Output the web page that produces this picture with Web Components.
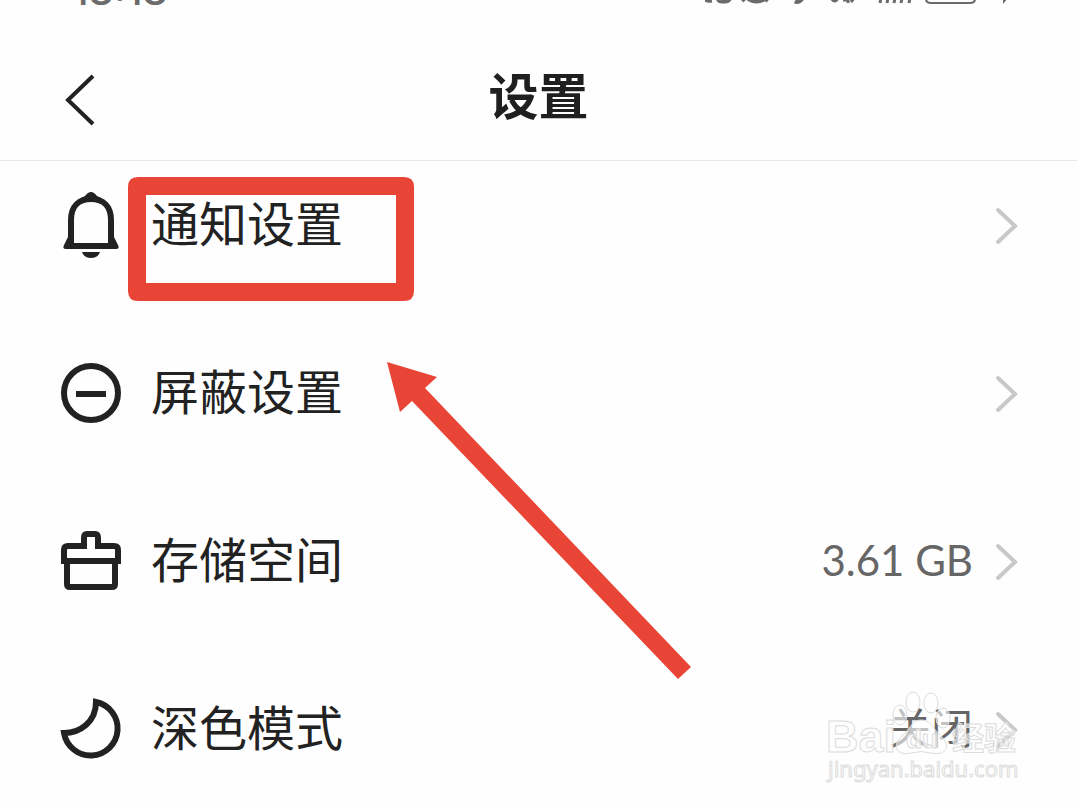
<!DOCTYPE html>
<html lang="zh-CN">
<head>
<meta charset="utf-8">
<meta name="viewport" content="width=device-width, initial-scale=1">
<title>设置</title>
<style>
  html, body { margin: 0; background: #fefefe; }
  body { color: #222; font-family: "Noto Sans CJK SC", sans-serif; }
</style>
</head>
<body>
<settings-page>
  <status-bar slot="status">18:18</status-bar>
  <page-header slot="header">设置</page-header>
  <settings-row><row-icon slot="icon" name="bell"></row-icon>通知设置</settings-row>
  <settings-row><row-icon slot="icon" name="block"></row-icon>屏蔽设置</settings-row>
  <settings-row><row-icon slot="icon" name="storage"></row-icon>存储空间<span slot="value">3.61 GB</span></settings-row>
  <settings-row><row-icon slot="icon" name="moon"></row-icon>深色模式<span slot="value">关闭</span></settings-row>
  <pointer-marks slot="overlay"></pointer-marks>
  <site-watermark slot="overlay"></site-watermark>
</settings-page>
<script>
const define = (name, html, setup) => customElements.define(name, class extends HTMLElement {
  constructor() {
    super();
    const t = document.createElement('template');
    t.innerHTML = html;
    this.attachShadow({ mode: 'open' }).append(t.content.cloneNode(true));
  }
  connectedCallback() { if (setup) setup(this); }
});

define('settings-page', `
<style>
  :host { display: block; position: relative; overflow: hidden; padding-bottom: 12px; }
  main { display: flex; flex-direction: column; gap: 38px; }
</style>
<slot name="status"></slot>
<slot name="header"></slot>
<main><slot></slot></main>
<slot name="overlay"></slot>`);

define('status-bar', `
<style>
  :host { display: flex; justify-content: space-between; align-items: flex-end; height: 8px;
          padding: 0 60px 0 72px; overflow: hidden; color: #6b6b6b; }
  .time { font: 500 40px/34px Inter, sans-serif; }
  svg { flex: none; display: block; }
</style>
<span class="time"><slot></slot></span>
<svg width="312" height="8" viewBox="0 0 312 8" fill="none" stroke="#6b6b6b" stroke-width="3" aria-hidden="true">
  <path d="M-1-1q3 3 8 2M12-2q1 4 5 4h3q4 0 6-4M16 0h6"/>
  <path d="M37 1l3-3M43-1q9 5 17 0M59-2l4 3" stroke-width="4"/>
  <path d="M90 1q4 2 8-4" stroke-width="5"/>
  <path d="M126-2q4 6 7 0M138 0h5M143-1v4M146 2l3-4" stroke-width="3"/>
  <path d="M176-2l-1 5M183-2l-1 5M190-2l-1 5M197-2l-1 5M205-2l-1 5" />
  <path d="M221-4v3q0 4 5 4h39q5 0 5-4v-3" stroke-width="2"/>
  <path d="M298-2h5l-5 6z" fill="#6b6b6b" stroke="none"/>
</svg>`);

define('page-header', `
<style>
  :host { display: grid; grid-template-columns: 1fr auto 1fr; align-items: center;
          height: 152px; padding: 0 56px; border-bottom: 1px solid #e8e8e8; box-sizing: content-box; }
  button { width: 48px; height: 64px; margin: 32px 0 0; padding: 0; border: 0; background: none; }
  svg { display: block; }
  h1 { margin: 18px 0 0; font-size: 50px; line-height: 72px; font-weight: 700; color: #1f1f1f; }
</style>
<button aria-label="返回"><svg width="48" height="64" viewBox="0 0 48 64" fill="none" stroke="#222" stroke-width="4"><path d="M37 8L12 32l25 24"/></svg></button>
<h1><slot></slot></h1>`);

define('settings-row', `
<style>
  :host { display: block; }
  button { display: flex; align-items: center; width: 100%; height: 130px; padding: 0 59px 0 60px;
           border: 0; background: none; color: #222; font: inherit; text-align: left; }
  .label { flex: 1; margin-left: 29px; padding-bottom: 10px; font-size: 48px; line-height: 72px; }
  .value { padding-bottom: 4px; font-family: Lato, "Noto Sans CJK SC", sans-serif; font-size: 42px; line-height: 64px; color: #666; }
  .chevron { flex: none; margin-left: 21px; }
</style>
<button>
  <slot name="icon"></slot>
  <span class="label"><slot></slot></span>
  <span class="value"><slot name="value"></slot></span>
  <svg class="chevron" width="24" height="40" viewBox="0 0 24 40" fill="none" stroke="#c8c8c8" stroke-width="4" stroke-linecap="round" aria-hidden="true"><path d="M4 4l17 16L4 36"/></svg>
</button>`);

const icons = {
  bell: `<path d="M11 51V27C11 13 19 6 31 6s20 7 20 21v24"/>
    <path d="M21 5l4-2q3-4 6-4t6 4l4 2z" fill="#222" stroke="none"/>
    <path d="M8 44l-4 8q-2 4 2 4h50q4 0 2-4l-4-8v6H8z" fill="#222" stroke="none"/>
    <path d="M22 59h18q-2 6-9 6t-9-6z" fill="#222" stroke="none"/>`,
  block: `<circle cx="31" cy="32" r="27"/><path d="M16 33h30"/>`,
  storage: `<path d="M4 35V21q0-4 4-4h16V9q0-4 3-4h8q3 0 3 4v8h16q4 0 4 4v14"/>
    <path d="M1 32h60M7 32v23q0 3 3 3h42q3 0 3-3V32"/>`,
  moon: `<path d="M36 5A27 27 0 1 1 4 36C20 36 36 25 36 5z"/>`
};
define('row-icon', `
<style>:host { display: block; flex: none; width: 62px; height: 66px; } svg { display: block; overflow: visible; }</style>
<svg width="62" height="66" viewBox="0 0 62 66" fill="none" stroke="#222" stroke-width="6" aria-hidden="true"></svg>`,
  el => { el.shadowRoot.querySelector('svg').innerHTML = icons[el.getAttribute('name')]; });

define('pointer-marks', `
<style>:host { display: block; position: absolute; left: 128px; top: 177px; pointer-events: none; } svg { display: block; }</style>
<svg width="564" height="502" viewBox="0 0 564 502" aria-hidden="true">
  <path d="M10 0h266q10 0 10 10v104q0 10-10 10H10q-10 0-10-10V10Q0 0 10 0zM18 18v88h250V18z" fill="#e84536" fill-rule="evenodd"/>
  <path d="M259 185l50 15-12 11 266 279-13 12L284 224l-12 11z" fill="#e84536"/>
</svg>`);

define('site-watermark', `
<style>
  :host { display: block; position: absolute; right: 55px; top: 686px; pointer-events: none; }
  svg { display: block; }
  text { font-family: "Liberation Sans", "Noto Sans CJK SC", sans-serif; font-weight: 700; }
  .url { font-family: "Noto Sans", sans-serif; font-weight: 400; }
</style>
<svg width="200" height="102" viewBox="0 0 200 102" fill="#fff" fill-opacity=".6" stroke="#dcdcdc" stroke-width="1">
  <ellipse cx="78" cy="29" rx="7" ry="10"/><ellipse cx="91" cy="16" rx="7" ry="10"/>
  <ellipse cx="109" cy="17" rx="7" ry="10"/><ellipse cx="121" cy="32" rx="7" ry="10"/>
  <path d="M99 34c-9 0-11 9-18 15-14 12-4 21 8 18q10-3 20 0c14 3 22-6 9-18-7-6-9-15-19-15z"/>
  <text x="4" y="66" font-size="45">Bai</text>
  <text x="84" y="62" font-size="26">du</text>
  <text x="130" y="64" font-size="32">经验</text>
  <text class="url" x="6" y="91" font-size="22">jingyan.baidu.com</text>
</svg>`);
</script>
</body>
</html>
